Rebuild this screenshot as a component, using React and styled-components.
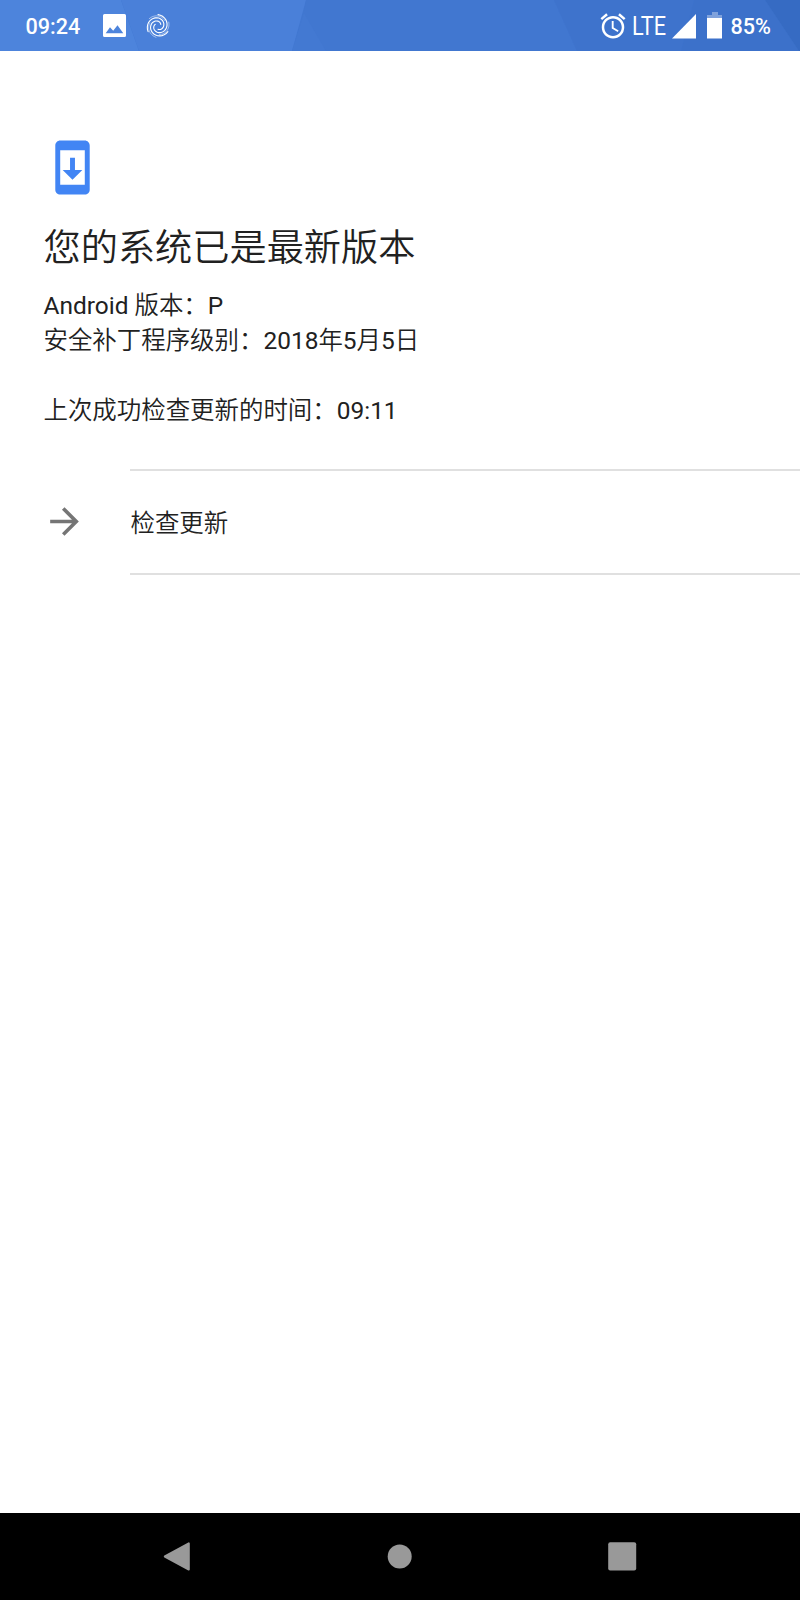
import React from 'react'
import styled, { createGlobalStyle } from 'styled-components'
import { MdAlarm, MdArrowForward, MdSystemUpdate } from 'react-icons/md'

// one arm of the swirl icon, wound from the rim to the centre
const swirlArm = (start, turn, inner) => {
    const points = []
    for (let i = 0; i <= 24; i++) {
        const t = i / 24
        const angle = ((start + t * turn) * Math.PI) / 180
        const r = 11.4 - (11.4 - inner) * t
        points.push(
            `${(12 + r * Math.cos(angle)).toFixed(2)} ${(12 + r * Math.sin(angle)).toFixed(2)}`
        )
    }
    return `M${points.join('L')}`
}

const SwirlIcon = () => (
    <Swirl viewBox="0 0 24 24">
        {[150, 270, 30].map((start) => (
            <path key={start} d={swirlArm(start, 300, 3.2)} />
        ))}
        {[100, 220, 340].map((start) => (
            <path key={start} d={swirlArm(start, 100, 8.6)} strokeWidth="0.5" />
        ))}
    </Swirl>
)

const StatusBar = () => (
    <Status>
        <Facets viewBox="0 0 800 51" preserveAspectRatio="none">
            <path fill="#4d84dc" d="M0 0H121L139 51H0z" />
            <path fill="#4a80d9" d="M121 0H306L292 51H139z" />
            <path fill="#4177d0" d="M306 0H554L577 51H326L304 13z" />
            <path fill="#4379d2" d="M304 13L326 51H292z" />
            <path fill="#3e73cc" d="M554 0H694L681 51H577z" />
            <path fill="#3c71ca" d="M694 0H765L799 51H681z" />
            <path fill="#366bc3" d="M765 0H800V51H799z" />
        </Facets>
        <StatusGroup>
            <Clock>09:24</Clock>
            <Photo viewBox="0 0 23 23">
                <path
                    fillRule="evenodd"
                    d="M1.5 0h20Q23 0 23 1.5v20Q23 23 21.5 23h-20Q0 23 0 21.5v-20Q0 0 1.5 0zM2.7 19.2H20.3L14.5 11.3L10.2 16.8L7 13.3z"
                />
            </Photo>
            <SwirlIcon />
        </StatusGroup>
        <StatusGroup>
            <AlarmIcon />
            <Network>LTE</Network>
            <Signal viewBox="0 0 24 25">
                <path d="M24 0V24.5H0z" />
            </Signal>
            <Battery viewBox="0 0 15 27">
                <path opacity=".35" d="M5 0h6v3h4v3H0V3h5z" />
                <path d="M0 6h15v20.5H0z" />
            </Battery>
            <Percent>85%</Percent>
        </StatusGroup>
    </Status>
)

const App = () => (
    <>
        <GlobalStyle />
        <Screen>
            <StatusBar />
            <Content>
                <UpdateIcon />
                <Title>您的系统已是最新版本</Title>
                <Info>
                    <p>
                        <Latin>Android </Latin>版本：<Latin>P</Latin>
                    </p>
                    <p>
                        安全补丁程序级别：<Latin>2018</Latin>年<Latin>5</Latin>月<Latin>5</Latin>日
                    </p>
                </Info>
                <Info>
                    <p>
                        上次成功检查更新的时间：<Latin>09:11</Latin>
                    </p>
                </Info>
            </Content>
            <Action>
                <ArrowIcon />
                <ActionLabel>检查更新</ActionLabel>
            </Action>
            <NavBar>
                <NavIcon viewBox="0 0 30 30">
                    <path d="M26.8 1.4V27.6L2.8 14.5z" strokeWidth="2" strokeLinejoin="round" />
                </NavIcon>
                <NavIcon viewBox="0 0 30 30">
                    <circle cx="14.7" cy="14.5" r="12" strokeWidth="0" />
                </NavIcon>
                <NavIcon viewBox="0 0 30 30">
                    <rect x="1.2" y="0.3" width="28" height="28.2" rx="2" strokeWidth="0" />
                </NavIcon>
            </NavBar>
        </Screen>
    </>
)

const GlobalStyle = createGlobalStyle`
    * {
        box-sizing: border-box;
    }
    body {
        margin: 0;
        background: #ffffff;
        font-family: Roboto, 'Noto Sans CJK SC', sans-serif;
    }
    p, h1 {
        margin: 0;
    }
    svg {
        display: block;
        flex-shrink: 0;
    }
`

const Screen = styled.div`
    display: flex;
    flex-direction: column;
    width: 800px;
    height: 1600px;
    color: #212121;
    background: #ffffff;
    font-weight: 350;
`

const Latin = styled.span`
    font-weight: 400;
`

const Status = styled.header`
    position: relative;
    display: flex;
    justify-content: space-between;
    height: 51px;
    padding: 0 29px 0 25.5px;
    color: #ffffff;
    background: #4177d0;
`

// background pattern behind the status icons
const Facets = styled.svg`
    position: absolute;
    inset: 0;
    width: 100%;
    height: 100%;
`

const StatusGroup = styled.div`
    position: relative;
    display: flex;
    align-items: center;
`

const Clock = styled.span`
    width: 77.5px;
    padding-top: 2px;
    font-size: 21.6px;
    font-weight: 500;
`

const Photo = styled.svg`
    width: 23px;
    height: 23px;
    fill: #ffffff;
`

const Swirl = styled.svg`
    width: 24px;
    height: 24px;
    margin-left: 19.5px;
    fill: none;
    stroke: #ffffff;
    stroke-width: 1.1;
    stroke-linecap: round;
`

const AlarmIcon = styled(MdAlarm)`
    width: 30px;
    height: 30px;
    margin-right: 4px;
`

const Network = styled.span`
    width: 40px;
    font-size: 25.5px;
    font-weight: 400;
    transform: scaleX(0.85);
    transform-origin: left;
`

const Signal = styled.svg`
    width: 24px;
    height: 25px;
    margin-top: 1px;
    margin-right: 11px;
    fill: #ffffff;
`

const Battery = styled.svg`
    width: 15px;
    height: 27px;
    margin-right: 9px;
    fill: #ffffff;
`

const Percent = styled.span`
    padding-top: 2px;
    font-size: 21.6px;
    font-weight: 500;
`

const Content = styled.main`
    padding: 87px 43.5px 0;
    height: 418px;
`

const UpdateIcon = styled(MdSystemUpdate)`
    width: 59px;
    height: 59px;
    margin-left: -0.5px;
    color: #4285f4;
`

const Title = styled.h1`
    margin-top: 23.5px;
    font-size: 37.2px;
    font-weight: inherit;
    line-height: 54px;
`

const Info = styled.div`
    margin-top: 13.5px;
    margin-bottom: 35px;
    font-size: 24.45px;
    line-height: 35px;

    & + & {
        margin-top: 0;
    }
`

const Action = styled.div`
    display: grid;
    grid-template-columns: 86px 1fr;
    align-items: center;
    height: 106px;
    padding-left: 44px;
`

const ArrowIcon = styled(MdArrowForward)`
    width: 43px;
    height: 43px;
    margin-bottom: 1px;
    margin-left: -0.6px;
    color: #757575;
`

const ActionLabel = styled.div`
    display: flex;
    align-items: center;
    height: 106px;
    padding: 0 0 1px 0.5px;
    border-top: 2px solid #e0e0e0;
    border-bottom: 2px solid #e0e0e0;
    font-size: 24.45px;
`

const NavBar = styled.nav`
    display: flex;
    justify-content: space-between;
    align-items: center;
    height: 87px;
    margin-top: auto;
    padding: 0 163px 0 162px;
    background: #000000;
`

const NavIcon = styled.svg`
    width: 30px;
    height: 30px;
    fill: #999999;
    stroke: #999999;
`

export default App
